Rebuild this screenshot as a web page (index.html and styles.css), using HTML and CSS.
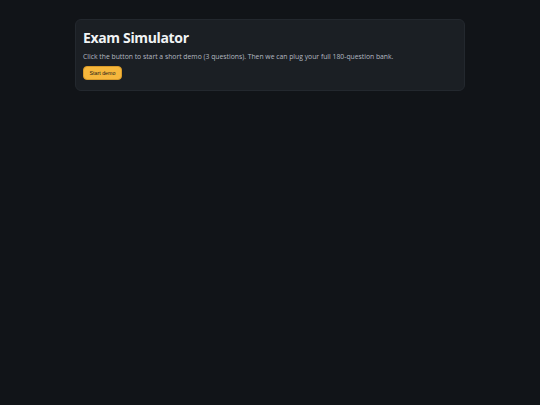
FILE: index.html
```html
<!DOCTYPE html>
<html>
<head>
<meta charset="utf-8">
<link rel="stylesheet" href="styles.css">
</head>
<body>
<main class="wrap">
  <section class="card">
    <h1 class="title">Exam Simulator</h1>
    <p class="desc">Click the button to start a short demo (3 questions). Then we can plug your full 180-question bank.</p>
    <button class="btn">Start demo</button>
  </section>
</main>
</body>
</html>
```
FILE: styles.css
```css
html, body {
  margin: 0;
  padding: 0;
  background: #111418;
  height: 100%;
}
body {
  font-family: "Open Sans", "Noto Sans", sans-serif;
  color: #e6e8eb;
}
.wrap {
  max-width: 390px;
  margin: 0 auto;
  padding-top: 19px;
}
.card {
  background: #1b1f24;
  border: 1px solid #23282e;
  border-radius: 6px;
  padding: 8px 7px 10px;
}
.title {
  margin: 0;
  font-size: 14px;
  font-weight: 700;
  letter-spacing: -0.35px;
  line-height: 20px;
  color: #f1f3f5;
}
.desc {
  margin: 4px 0 4px;
  font-size: 6.8px;
  line-height: 10px;
  color: #b3b9c1;
}
.btn {
  display: block;
  background: #f6b73c;
  border: 1px solid #d89a2a;
  border-radius: 4px;
  height: 14px;
  padding: 0 5.5px;
  font-family: "Liberation Sans", sans-serif;
  font-size: 5.3px;
  color: #1a1a1a;
  cursor: pointer;
}
```
